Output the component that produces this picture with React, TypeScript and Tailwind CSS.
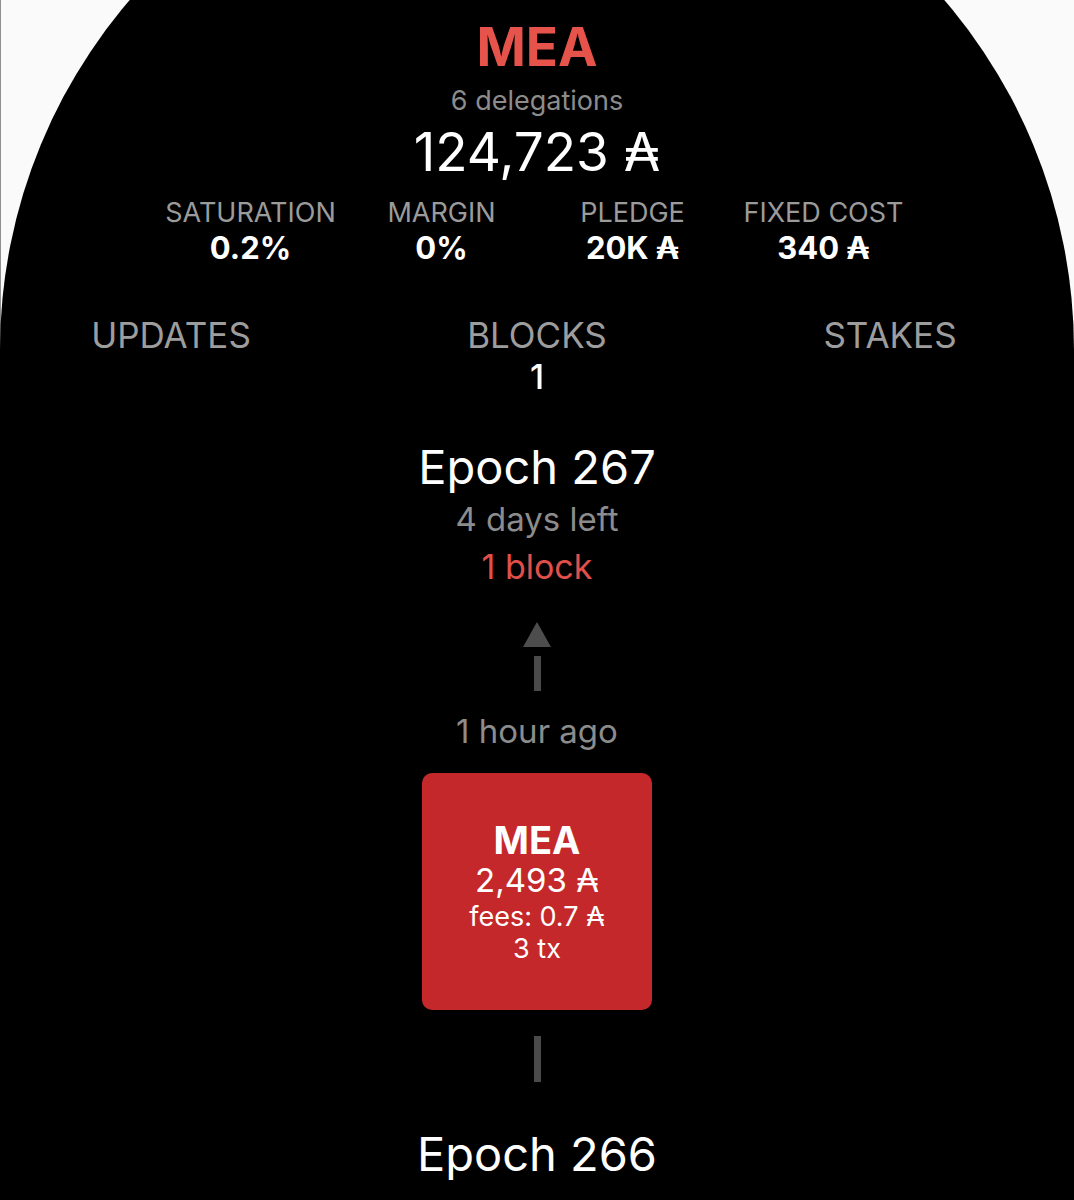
import React from "react";

const ADA = "\u20B3";

function Stat({ label, value }: { label: string; value: string }) {
  return (
    <div className="flex flex-col items-center">
      <div className="text-[27px] leading-none text-[#9b9b9b]">{label}</div>
      <div className="mt-[6px] text-[31px] font-bold leading-none text-white">{value}</div>
    </div>
  );
}

export default function App() {
  return (
    <div
      className="relative h-[1200px] overflow-hidden bg-[#fafafa] shadow-[inset_1px_0_0_#8f8f8f]"
      style={{ fontFamily: "Inter, 'Noto Sans', sans-serif" }}
    >
      <div className="-mt-[187px] flex min-h-[1500px] flex-col items-center rounded-t-[537px] bg-black pt-[208px] text-center">
        {/* pool header */}
        <div className="text-[53px] font-bold leading-none text-[#e5534b]">MEA</div>
        <div className="mt-[13px] text-[27px] leading-none text-[#8c8c8c]">6 delegations</div>
        <div className="mt-[12px] text-[53px] leading-none text-white">124,723 {ADA}</div>

        {/* pool parameters */}
        <div className="mt-[20px] grid w-[764px] grid-cols-4">
          <Stat label="SATURATION" value="0.2%" />
          <Stat label="MARGIN" value="0%" />
          <Stat label="PLEDGE" value={`20K ${ADA}`} />
          <Stat label="FIXED COST" value={`340 ${ADA}`} />
        </div>

        {/* tabs */}
        <div className="mt-[55px] flex w-full text-[35px] leading-none text-[#9d9d9d]">
          <div className="w-[342px]">UPDATES</div>
          <div className="flex w-[390px] flex-col items-center">
            <div>BLOCKS</div>
            <div className="mt-[7px] text-[34px] font-medium text-white">1</div>
          </div>
          <div className="w-[316px]">STAKES</div>
        </div>

        {/* current epoch */}
        <div className="mt-[49px] text-[47px] leading-none text-white">Epoch 267</div>
        <div className="mt-[13px] text-[33px] leading-none text-[#8c8c8c]">4 days left</div>
        <div className="mt-[14px] text-[34px] leading-none text-[#e0504a]">1 block</div>

        {/* arrow */}
        <div className="mt-[38px] flex flex-col items-center">
          <svg width="28" height="25" viewBox="0 0 28 25">
            <polygon points="14,0 28,25 0,25" fill="#4d4d4d" />
          </svg>
          <div className="mt-[9px] h-[35px] w-[7px] bg-[#4a4a4a]" />
        </div>

        <div className="mt-[24px] text-[33px] leading-none text-[#8c8c8c]">1 hour ago</div>

        {/* block card */}
        <div className="mt-[25px] flex h-[237px] w-[230px] flex-col items-center rounded-[10px] bg-[#c5282a] pt-[48px] text-white">
          <div className="text-[38px] font-bold leading-none">MEA</div>
          <div className="mt-[5px] text-[33px] leading-none">2,493 {ADA}</div>
          <div className="mt-[6px] text-[27px] leading-none">fees: 0.7 {ADA}</div>
          <div className="mt-[5px] text-[27px] leading-none">3 tx</div>
        </div>

        <div className="mt-[26px] h-[46px] w-[7px] bg-[#4a4a4a]" />

        <div className="mt-[48px] text-[47px] leading-none text-white">Epoch 266</div>
      </div>
    </div>
  );
}
